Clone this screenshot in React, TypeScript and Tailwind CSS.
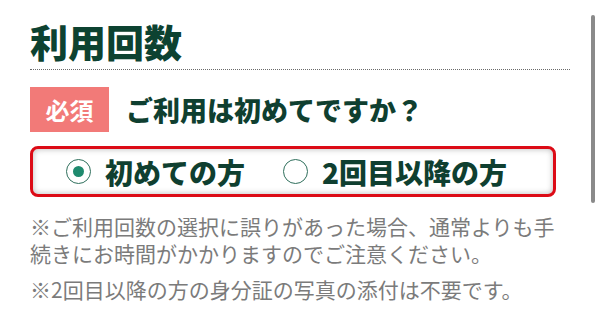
import React, { useState } from "react";

const jp = "font-['Noto_Sans_CJK_JP','Noto_Sans',sans-serif]";

export default function App() {
  const [choice, setChoice] = useState<"first" | "repeat">("first");

  const Radio = ({ value, label }: { value: "first" | "repeat"; label: string }) => (
    <button
      type="button"
      onClick={() => setChoice(value)}
      className="flex items-center gap-[14px] cursor-pointer"
    >
      <span className="w-[25px] h-[25px] rounded-full border-[1.5px] border-[#2f6f5c] bg-white flex items-center justify-center">
        {choice === value && <span className="w-[11px] h-[11px] rounded-full bg-[#1f8a6e]" />}
      </span>
      <span className="text-[28px] font-black text-[#0f3f30] leading-none">{label}</span>
    </button>
  );

  return (
    <div className={`relative w-[600px] h-[330px] bg-white overflow-hidden ${jp}`}>
      <div className="pl-[30px] w-[570px]">
        <h1 className="pt-[18px] text-[38px] font-black leading-[46px] text-[#0d4231]">
          利用回数
        </h1>
        <div className="mt-[5px] border-b border-dotted border-[#6a6a6a]" />

        <div className="mt-[17px] flex items-center gap-[17px]">
          <span className="w-[79px] h-[45px] bg-[#f27a78] text-white text-[24px] font-bold flex items-center justify-center">
            必須
          </span>
          <span className="text-[27px] font-black text-[#0f3f30] leading-none">
            ご利用は初めてですか？
          </span>
        </div>

        <div className="mt-[14px] w-[526px] h-[51px] border-[3px] border-[#dc0b16] rounded-[8px] shadow-[inset_0_0_6px_rgba(0,0,0,0.28)] flex items-center pl-[33px] gap-[38px]">
          <Radio value="first" label="初めての方" />
          <Radio value="repeat" label="2回目以降の方" />
        </div>

        <div className="mt-[16px] text-[21px] leading-[27px] text-[#7b7b7b]">
          <p>※ご利用回数の選択に誤りがあった場合、通常よりも手続きにお時間がかかりますのでご注意ください。</p>
          <p className="mt-[9px]">※2回目以降の方の身分証の写真の添付は不要です。</p>
        </div>
      </div>

      <div className="absolute left-[591px] top-[15px] w-[4px] h-[188px] rounded-full bg-[#8a8a8a]" />
    </div>
  );
}
